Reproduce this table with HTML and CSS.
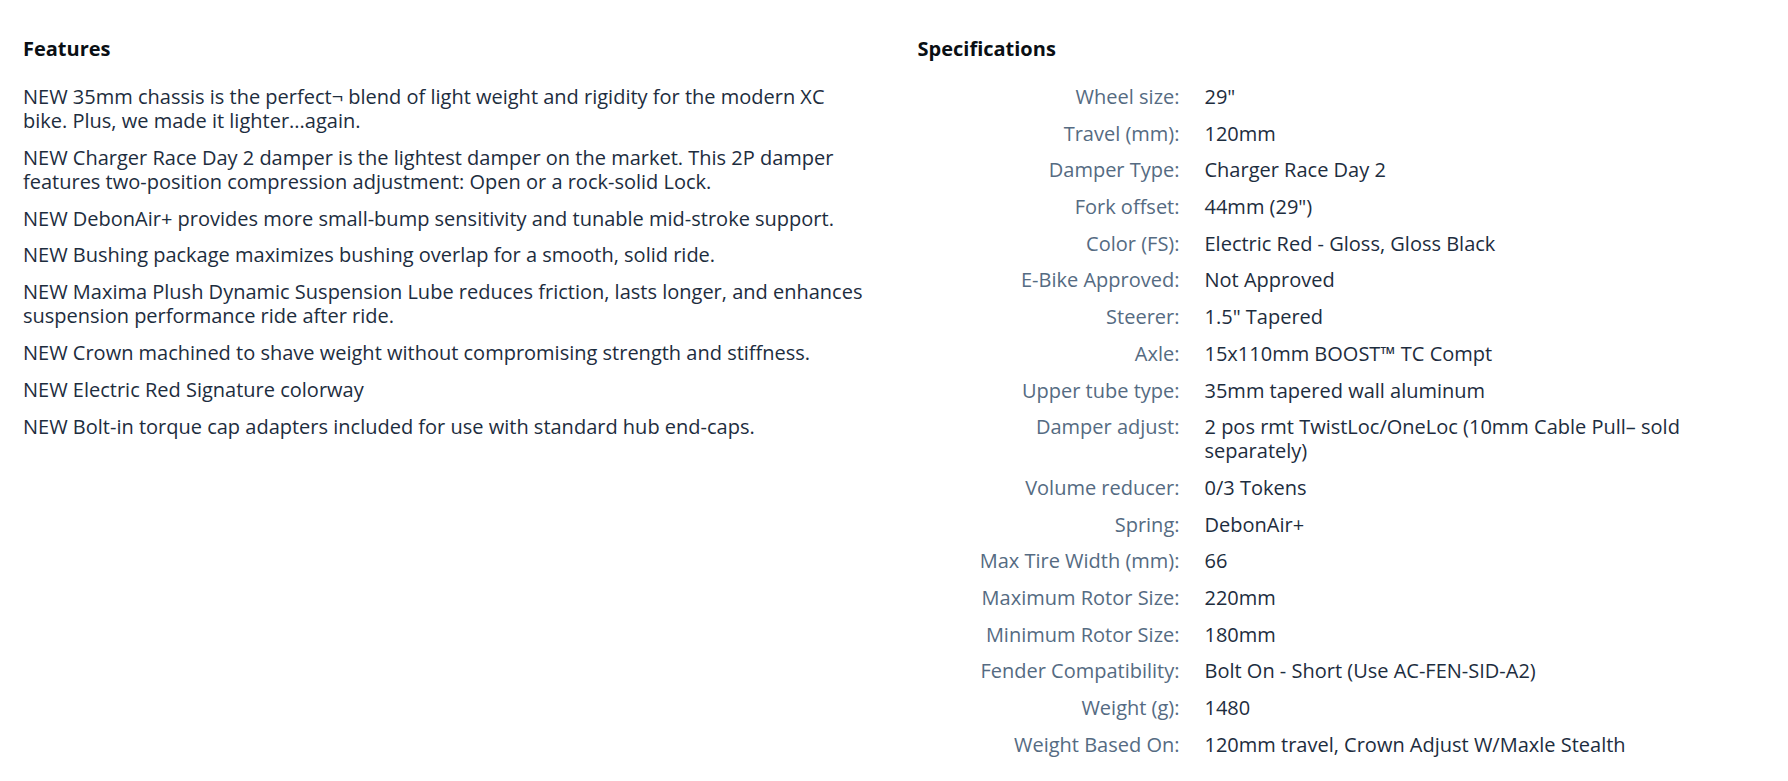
FILE: index.html
```html
<!DOCTYPE html>
<html lang="en">
<head>
<meta charset="utf-8">
<title>Product details</title>
<link rel="stylesheet" href="styles.css">
</head>
<body>
<main class="details">
  <section class="panel">
    <h2 class="panel-title">Features</h2>
    <ul class="features">
      <li>NEW 35mm chassis is the perfect¬ blend of light weight and rigidity for the modern XC bike. Plus, we made it lighter...again.</li>
      <li>NEW Charger Race Day 2 damper is the lightest damper on the market. This 2P damper features two-position compression adjustment: Open or a rock-solid Lock.</li>
      <li>NEW DebonAir+ provides more small-bump sensitivity and tunable mid-stroke support.</li>
      <li>NEW Bushing package maximizes bushing overlap for a smooth, solid ride.</li>
      <li>NEW Maxima Plush Dynamic Suspension Lube reduces friction, lasts longer, and enhances suspension performance ride after ride.</li>
      <li>NEW Crown machined to shave weight without compromising strength and stiffness.</li>
      <li>NEW Electric Red Signature colorway</li>
      <li>NEW Bolt-in torque cap adapters included for use with standard hub end-caps.</li>
    </ul>
  </section>
  <section class="panel">
    <h2 class="panel-title">Specifications</h2>
    <dl class="specs">
      <dt>Wheel size:</dt><dd>29"</dd>
      <dt>Travel (mm):</dt><dd>120mm</dd>
      <dt>Damper Type:</dt><dd>Charger Race Day 2</dd>
      <dt>Fork offset:</dt><dd>44mm (29")</dd>
      <dt>Color (FS):</dt><dd>Electric Red - Gloss, Gloss Black</dd>
      <dt>E-Bike Approved:</dt><dd>Not Approved</dd>
      <dt>Steerer:</dt><dd>1.5" Tapered</dd>
      <dt>Axle:</dt><dd>15x110mm BOOST™ TC Compt</dd>
      <dt>Upper tube type:</dt><dd>35mm tapered wall aluminum</dd>
      <dt>Damper adjust:</dt><dd>2 pos rmt TwistLoc/OneLoc (10mm Cable Pull– sold separately)</dd>
      <dt>Volume reducer:</dt><dd>0/3 Tokens</dd>
      <dt>Spring:</dt><dd>DebonAir+</dd>
      <dt>Max Tire Width (mm):</dt><dd>66</dd>
      <dt>Maximum Rotor Size:</dt><dd>220mm</dd>
      <dt>Minimum Rotor Size:</dt><dd>180mm</dd>
      <dt>Fender Compatibility:</dt><dd>Bolt On - Short (Use AC-FEN-SID-A2)</dd>
      <dt>Weight (g):</dt><dd>1480</dd>
      <dt>Weight Based On:</dt><dd>120mm travel, Crown Adjust W/Maxle Stealth</dd>
    </dl>
  </section>
</main>
</body>
</html>
```
FILE: styles.css
```css
html, body {
  margin: 0;
  padding: 0;
  background: #ffffff;
}

body {
  font-family: "Open Sans", "Noto Sans", sans-serif;
  font-size: 20px;
  line-height: 24px;
  color: #1d2d3e;
}

.details {
  display: grid;
  grid-template-columns: 1fr 1fr;
  column-gap: 47px;
  padding: 37px 23px 0;
}

.panel {
  min-width: 0;
}

.panel-title {
  margin: 0 0 24px;
  font-size: 20px;
  line-height: 24px;
  font-weight: 700;
  color: #0a0f14;
}

.features {
  list-style: none;
  margin: 0;
  padding: 0;
  display: flex;
  flex-direction: column;
  gap: 12.8px;
}

.features li {
  margin: 0;
}

.specs {
  display: grid;
  grid-template-columns: 262px 1fr;
  column-gap: 25px;
  row-gap: 12.7px;
  margin: 0;
}

.specs dt {
  text-align: right;
  color: #556b82;
}

.specs dd {
  margin: 0;
  color: #1d2d3e;
}
```
